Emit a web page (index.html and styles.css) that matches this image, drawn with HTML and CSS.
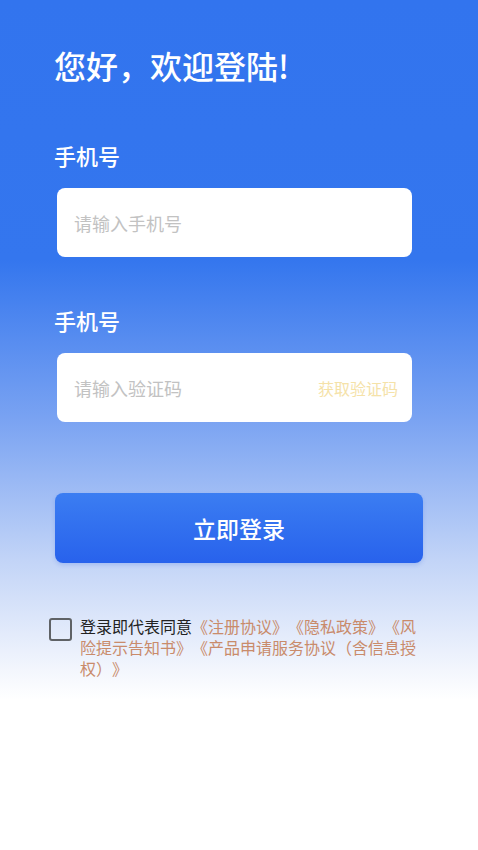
FILE: index.html
```html
<!DOCTYPE html>
<html lang="zh-CN">
  <head>
    <meta charset="UTF-8" />
    <meta name="viewport" content="width=device-width, initial-scale=1.0" />
    <title>登录</title>
    <link rel="stylesheet" href="styles.css">
  </head>
  <body>
    <div class="login-page">
      <h1 class="title">您好，欢迎登陆!</h1>

      <div class="field-label">手机号</div>
      <div class="input-box">
        <span class="placeholder">请输入手机号</span>
      </div>

      <div class="field-label">手机号</div>
      <div class="input-box">
        <span class="placeholder">请输入验证码</span>
        <span class="get-code">获取验证码</span>
      </div>

      <button class="login-btn">立即登录</button>

      <div class="agreement">
        <span class="checkbox"></span>
        <p class="agreement-text">登录即代表同意<span class="link">《注册协议》《隐私政策》《风险提示告知书》《产品申请服务协议（含信息授权）》</span></p>
      </div>
    </div>
  </body>
</html>
```

FILE: styles.css
```css
* {
  margin: 0;
  padding: 0;
  box-sizing: border-box;
}

body {
  font-family: "Noto Sans CJK SC", "Noto Sans", sans-serif;
  background: #fff;
  text-spacing-trim: space-all;
}

.login-page {
  height: 850px;
  padding: 45px 0 0 54px;
  background: linear-gradient(
    180deg,
    #3274ee 0px,
    #3476ee 260px,
    #7aa3f2 420px,
    #c2d4f7 560px,
    #f3f6fd 670px,
    #ffffff 700px
  );
}

/* 标题 */
.title {
  font-size: 32px;
  line-height: 40px;
  font-weight: 500;
  color: #fff;
}

.field-label {
  margin-top: 55px;
  font-size: 22px;
  line-height: 30px;
  font-weight: 500;
  color: #fff;
}

.input-box + .field-label {
  margin-top: 48px;
}

.input-box {
  display: flex;
  align-items: center;
  justify-content: space-between;
  width: 355px;
  height: 69px;
  margin: 18px 0 0 3px;
  padding: 0 14px 0 17px;
  background: #fff;
  border-radius: 8px;
}

.placeholder {
  font-size: 18px;
  color: #c2c2c2;
}

.get-code {
  font-size: 16px;
  color: #f5e2a8;
}

/* 登录按钮 */
.login-btn {
  display: block;
  width: 368px;
  height: 70px;
  margin: 71px 0 0 1px;
  border: none;
  border-radius: 8px;
  background: linear-gradient(180deg, #3b7df2, #2862ec);
  box-shadow: 0 2px 4px rgba(40, 90, 220, 0.2);
  font-family: inherit;
  font-size: 23px;
  font-weight: 500;
  color: #fff;
}

/* 协议 */
.agreement {
  display: flex;
  align-items: flex-start;
  gap: 8px;
  margin: 55px 0 0 -5px;
}

.checkbox {
  flex: none;
  width: 23px;
  height: 23px;
  border: 2px solid #5f6266;
  border-radius: 3px;
}

.agreement-text {
  width: 340px;
  margin-top: -2px;
  font-size: 16px;
  line-height: 21px;
  color: #222;
}

.agreement-text .link {
  color: #c98b6b;
}
```
